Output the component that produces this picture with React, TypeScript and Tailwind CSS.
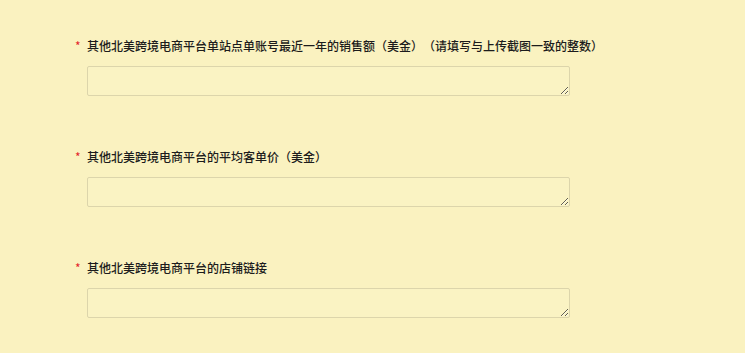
const fields = [
  "其他北美跨境电商平台单站点单账号最近一年的销售额（美金）（请填写与上传截图一致的整数）",
  "其他北美跨境电商平台的平均客单价（美金）",
  "其他北美跨境电商平台的店铺链接",
];

export default function App() {
  return (
    <div
      className="min-h-[353px] w-full bg-[#faf2c0] pt-[36px] text-[12px] text-[#1c1c1c] [text-spacing-trim:space-all]"
      style={{ fontFamily: '"Noto Sans CJK SC", "Noto Sans", sans-serif' }}
    >
      {fields.map((label) => (
        <div key={label} className="mb-[51px]">
          <div className="flex h-[20px] items-center pl-[75px] leading-[20px]">
            <span className="mr-[5px] w-[7px] text-[#e3262b]">*</span>
            <span className="font-medium">{label}</span>
          </div>
          <textarea className="ml-[87px] mt-[10px] block h-[30px] w-[483px] rounded-[2px] border border-[#dcd5ab] bg-[#faf3c3] outline-none" />
        </div>
      ))}
    </div>
  );
}
